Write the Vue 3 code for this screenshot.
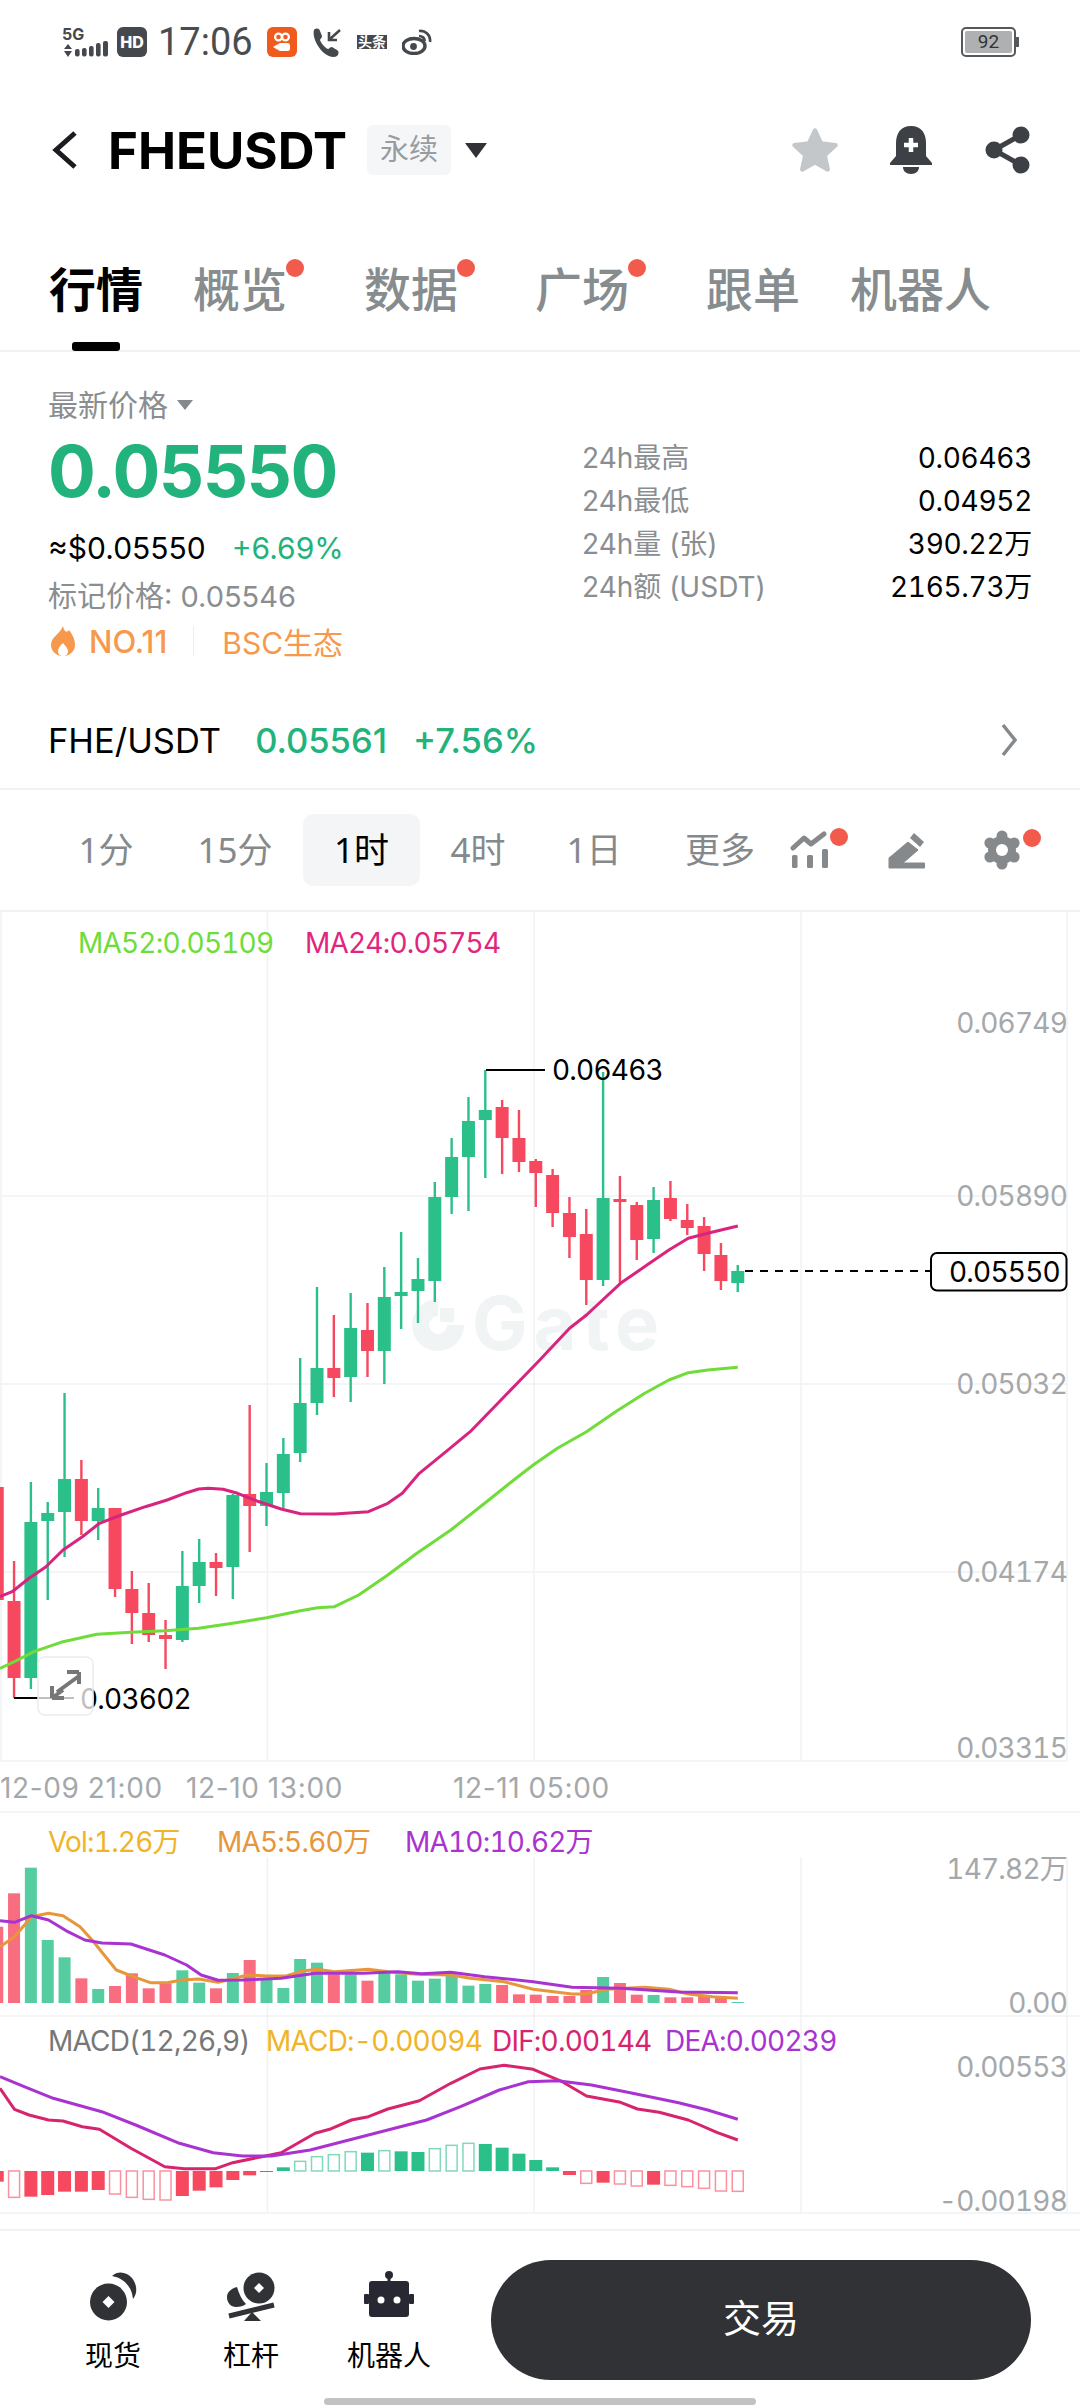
<script setup>
const GREEN = '#2bc08a'
const RED = '#f6485f'

// [tipo, mecha arriba, mecha abajo, cuerpo arriba, cuerpo abajo]
const velas = [
  ['r', 1487, 1600, 1487, 1600], ['r', 1561, 1698, 1601, 1678], ['g', 1482, 1689, 1522, 1678],
  ['g', 1502, 1600, 1513, 1521], ['g', 1393, 1557, 1479, 1512], ['r', 1460, 1535, 1479, 1521],
  ['g', 1488, 1540, 1508, 1521], ['r', 1508, 1597, 1508, 1589], ['r', 1571, 1644, 1589, 1613],
  ['r', 1583, 1642, 1613, 1635], ['r', 1620, 1669, 1635, 1639], ['g', 1551, 1642, 1586, 1640],
  ['g', 1539, 1603, 1562, 1586], ['r', 1553, 1596, 1562, 1568], ['g', 1494, 1599, 1495, 1567],
  ['r', 1405, 1552, 1494, 1506], ['g', 1463, 1526, 1492, 1506], ['g', 1438, 1508, 1454, 1493],
  ['g', 1358, 1462, 1403, 1453], ['g', 1287, 1415, 1368, 1403], ['r', 1315, 1397, 1368, 1378],
  ['g', 1293, 1402, 1328, 1377], ['r', 1303, 1377, 1330, 1351], ['g', 1267, 1384, 1297, 1351],
  ['g', 1232, 1329, 1292, 1296], ['g', 1258, 1323, 1279, 1291], ['g', 1182, 1302, 1197, 1281],
  ['g', 1138, 1214, 1157, 1197], ['g', 1097, 1211, 1121, 1157], ['g', 1070, 1178, 1110, 1120],
  ['r', 1100, 1174, 1107, 1138], ['r', 1110, 1172, 1138, 1162], ['r', 1159, 1207, 1161, 1173],
  ['r', 1169, 1227, 1175, 1213], ['r', 1197, 1258, 1213, 1237], ['r', 1209, 1305, 1234, 1280],
  ['g', 1072, 1286, 1198, 1280], ['r', 1176, 1285, 1199, 1202], ['r', 1202, 1260, 1205, 1240],
  ['g', 1187, 1253, 1200, 1239], ['r', 1181, 1221, 1198, 1219], ['r', 1204, 1235, 1220, 1228],
  ['r', 1217, 1271, 1226, 1254], ['r', 1243, 1290, 1255, 1281], ['g', 1265, 1292, 1271, 1283],
]

const volumen = [
  ['r', 410], ['r', 310], ['g', 233], ['g', 450], ['g', 502], ['r', 565], ['g', 597], ['r', 588], ['r', 550],
  ['r', 595], ['r', 580], ['g', 541], ['g', 578], ['r', 595], ['g', 549], ['r', 510], ['g', 565], ['g', 594],
  ['g', 507], ['g', 518], ['r', 553], ['g', 553], ['r', 572], ['g', 548], ['g', 553], ['g', 572], ['g', 566],
  ['g', 553], ['g', 587], ['g', 582], ['r', 585], ['r', 613], ['r', 614], ['r', 618], ['r', 618], ['r', 600],
  ['g', 561], ['r', 579], ['r', 614], ['g', 615], ['r', 622], ['r', 622], ['r', 618], ['r', 620], ['g', 636],
]

// [tipo, extremo, hueco]
const histograma = [
  ['r', 1175, 0], ['r', 1222, 1], ['r', 1220, 0], ['r', 1215, 0], ['r', 1205, 0], ['r', 1205, 0], ['r', 1200, 0],
  ['r', 1212, 1], ['r', 1222, 1], ['r', 1228, 1], ['r', 1230, 1], ['r', 1218, 0], ['r', 1202, 0], ['r', 1192, 0],
  ['r', 1170, 0], ['r', 1156, 0], ['r', 1146, 0], ['g', 1132, 0], ['g', 1114, 1], ['g', 1100, 1], ['g', 1094, 1],
  ['g', 1085, 1], ['g', 1088, 0], ['g', 1082, 1], ['g', 1084, 0], ['g', 1086, 0], ['g', 1076, 1], ['g', 1066, 1],
  ['g', 1060, 1], ['g', 1062, 0], ['g', 1073, 0], ['g', 1091, 0], ['g', 1110, 0], ['g', 1132, 0], ['r', 1155, 0],
  ['r', 1180, 1], ['r', 1178, 0], ['r', 1182, 1], ['r', 1188, 1], ['r', 1184, 0], ['r', 1186, 1], ['r', 1190, 1],
  ['r', 1195, 1], ['r', 1203, 1], ['r', 1204, 1],
]

const xVela = (i) => 14.06 + (i - 1) * 16.83
const colorDe = (t) => (t === 'g' ? GREEN : RED)
const yInf = (z) => 1790 + z / 3

const linea = (pts, y0) =>
  pts.map(([x, y]) => `${(x / 2.063).toFixed(1)},${(y0 + y / 3).toFixed(1)}`).join(' ')

const ma24 = linea([[0,770],[25,755],[60,715],[95,680],[130,630],[170,590],[205,550],[250,525],[300,500],[345,480],[385,458],[410,447],[430,445],[460,448],[490,460],[530,483],[580,507],[620,521],[690,522],[760,515],[800,490],[830,460],[865,400],[920,335],[970,275],[1030,185],[1070,125],[1110,65],[1175,-35],[1210,-75],[1280,-170],[1340,-230],[1380,-270],[1420,-305],[1460,-320],[1522,-342]], 1340)
const ma52 = linea([[0,985],[30,965],[70,935],[130,905],[200,883],[270,877],[340,872],[410,865],[480,850],[550,833],[620,812],[655,803],[690,800],[740,765],[800,705],[860,640],[930,570],[1000,490],[1060,420],[1100,375],[1150,325],[1210,275],[1270,215],[1330,160],[1380,120],[1420,98],[1460,90],[1522,82]], 1340)
const ma5 = linea([[0,470],[30,440],[65,380],[100,370],[130,377],[165,410],[190,450],[240,540],[275,560],[310,578],[345,578],[375,570],[410,567],[450,577],[480,567],[510,555],[550,558],[590,558],[625,543],[655,538],[690,545],[760,538],[800,545],[860,553],[930,555],[970,565],[1040,575],[1100,598],[1180,612],[1210,612],[1250,598],[1330,592],[1380,598],[1420,612],[1470,620],[1522,625]], 1790)
const ma10 = linea([[0,392],[30,397],[65,377],[100,390],[140,425],[175,450],[210,459],[270,462],[340,495],[385,525],[415,555],[450,571],[500,570],[580,565],[650,550],[750,550],[820,545],[870,551],[930,547],[1000,560],[1100,575],[1180,592],[1280,595],[1400,606],[1522,608]], 1790)
const dif = linea([[0,895],[30,958],[60,975],[100,990],[130,993],[170,1010],[205,1018],[270,1075],[340,1130],[380,1136],[445,1136],[480,1118],[540,1100],[580,1088],[650,1030],[680,1018],[725,990],[760,980],[800,957],[865,932],[930,880],[990,837],[1040,826],[1100,838],[1160,875],[1210,918],[1280,937],[1315,957],[1360,967],[1420,990],[1480,1028],[1522,1050]], 1790)
const dea = linea([[0,860],[50,890],[110,925],[210,965],[280,1005],[370,1060],[440,1088],[500,1098],[560,1098],[640,1080],[720,1050],[800,1020],[880,990],[950,950],[1030,900],[1090,875],[1150,872],[1220,885],[1300,908],[1400,938],[1460,960],[1522,988]], 1790)

const tabs = [
  { t: '行情', on: true },
  { t: '概览', dot: true },
  { t: '数据', dot: true },
  { t: '广场', dot: true },
  { t: '跟单' },
  { t: '机器人' },
]
const stats = [
  ['24h最高', '0.06463'],
  ['24h最低', '0.04952'],
  ['24h量 (张)', '390.22万'],
  ['24h额 (USDT)', '2165.73万'],
]
const intervalos = [
  { t: '1分', c: 'i1' },
  { t: '15分', c: 'i2' },
  { t: '1时', c: 'i3 on' },
  { t: '4时', c: 'i4' },
  { t: '1日', c: 'i5' },
  { t: '更多', c: 'i6' },
]
const ejeY = [['0.06749', 1023], ['0.05890', 1196], ['0.05032', 1384], ['0.04174', 1572], ['0.03315', 1748]]
// lobulos del engranaje
const dientes = [0, 60, 120, 180, 240, 300].map((a) => ({
  x: 1002 + 14 * Math.sin((a * Math.PI) / 180),
  y: 850 - 14 * Math.cos((a * Math.PI) / 180),
}))
</script>

<template>
  <div class="page">
    <div class="status">
      <div class="signal">
        <span class="five">5G</span>
        <svg width="48" height="18" viewBox="62 39 48 18">
          <path d="M64 48l4-5 4 5zM64 50l4 6 4-6z" fill="#45484c" />
          <rect x="75" y="48" width="4.6" height="7.5" rx="2" fill="#45484c" />
          <rect x="82" y="47" width="4.6" height="8.5" rx="2" fill="#45484c" />
          <rect x="89" y="45" width="4.6" height="10.5" rx="2" fill="#45484c" />
          <rect x="96" y="42" width="4.6" height="13.5" rx="2" fill="#45484c" />
          <rect x="103" y="40" width="5" height="15.5" rx="2" fill="#45484c" />
        </svg>
      </div>
      <span class="hd">HD</span>
      <span class="time">17:06</span>
      <svg class="ic-kw" width="30" height="30" viewBox="0 0 30 30">
        <rect width="30" height="30" rx="6" fill="#f15a1d" />
        <circle cx="11.5" cy="10" r="3.4" fill="none" stroke="#fff" stroke-width="2.2" />
        <circle cx="18.5" cy="10" r="3.4" fill="none" stroke="#fff" stroke-width="2.2" />
        <rect x="11" y="16" width="12" height="8" rx="2.5" fill="#fff" />
        <path d="M6 20l5-3v6z" fill="#fff" />
      </svg>
      <svg class="ic-ph" width="30" height="30" viewBox="0 0 30 30">
        <path d="M2 3c2-2 5-2 6 1l2 5c0 2-2 3-2 4 1 3 5 8 8 9 1 0 2-2 4-2l5 3c2 1 2 4 0 6-3 2-8 1-13-3C6 21 0 10 2 3z" fill="#45484c" />
        <path d="M28 3L18 12M17 5v8h8" fill="none" stroke="#45484c" stroke-width="2.6" />
      </svg>
      <span class="toutiao">头条</span>
      <svg class="ic-wb" width="30" height="26" viewBox="0 0 30 26">
        <ellipse cx="12" cy="17" rx="11" ry="7.5" fill="none" stroke="#45484c" stroke-width="3.4" />
        <circle cx="11.5" cy="17.5" r="3.4" fill="#45484c" />
        <path d="M17 2c6-1 12 4 11 11M17 7c3 0 6 2 5.5 5" fill="none" stroke="#45484c" stroke-width="2.6" />
      </svg>
      <div class="battery"><span>92</span></div>
    </div>

    <div class="header">
      <svg class="back" width="26" height="38" viewBox="0 0 26 38">
        <path d="M23 2L4 19l19 17" fill="none" stroke="#1a1c1f" stroke-width="5" />
      </svg>
      <span class="symbol">FHEUSDT</span>
      <span class="tag">永续</span>
      <i class="tri"></i>
      <svg class="star" width="52" height="48" viewBox="0 0 24 22">
        <path d="M12 2l2.8 6 6.7.8-5 4.6 1.4 6.6-5.9-3.3L6.100 20l1.4-6.6-5-4.6 6.7-.8z" fill="#c4c7ca" stroke="#c4c7ca" stroke-width="2" stroke-linejoin="round" />
      </svg>
      <svg class="bell" width="44" height="48" viewBox="0 0 44 48">
        <path d="M22 0c10 0 15 7 15 17v13l6 7v2H1v-2l6-7V17C7 7 12 0 22 0z" fill="#3d4045" />
        <path d="M14 41h16c0 4-3 7-8 7s-8-3-8-7z" fill="#3d4045" />
        <path d="M22 12v14M15 19h14" stroke="#fff" stroke-width="4.5" />
      </svg>
      <svg class="share" width="46" height="48" viewBox="0 0 46 48">
        <path d="M36 9L9 24l27 15" fill="none" stroke="#3d4045" stroke-width="5" />
        <circle cx="36" cy="9" r="8.5" fill="#3d4045" />
        <circle cx="9" cy="24" r="8.5" fill="#3d4045" />
        <circle cx="36" cy="39" r="8.5" fill="#3d4045" />
      </svg>
    </div>

    <div class="tabs">
      <div v-for="tab in tabs" :key="tab.t" class="tab" :class="{ on: tab.on, dotted: tab.dot }">
        {{ tab.t }}
        <i v-if="tab.dot" class="dot"></i>
        <i v-if="tab.on" class="under"></i>
      </div>
    </div>

    <div class="resumen">
      <div class="left">
        <div class="latest">最新价格<i class="mini-tri"></i></div>
        <div class="last">0.05550</div>
        <div class="fiat">≈$0.05550<span class="pct">+6.69%</span></div>
        <div class="mark">标记价格: 0.05546</div>
        <div class="tags">
          <svg width="26" height="30" viewBox="0 0 26 30">
            <path d="M13 0c1 6 4 7 6 4 4 5 6 10 6 15 0 6-5 11-12 11S1 25 1 19C1 11 10 8 13 0z" fill="#f7994c" />
            <path d="M13 17c-3 3-5 5-5 8s2 5 5 5 5-2 5-5-3-5-5-8z" fill="#fff" />
          </svg>
          <span class="no">NO.11</span>
          <i class="sep"></i>
          <span class="bsc">BSC生态</span>
        </div>
      </div>
      <div class="right">
        <div v-for="s in stats" :key="s[0]" class="stat">
          <span class="k">{{ s[0] }}</span>
          <span class="v">{{ s[1] }}</span>
        </div>
      </div>
    </div>

    <div class="pair">
      <span class="name">FHE/USDT</span>
      <span class="up p1">0.05561</span>
      <span class="up">+7.56%</span>
      <svg class="chev" width="18" height="36" viewBox="0 0 18 36">
        <path d="M3 3l12 15L3 33" fill="none" stroke="#85898c" stroke-width="3.5" />
      </svg>
    </div>

    <div class="intervals">
      <div v-for="it in intervalos" :key="it.t" class="iv" :class="it.c">{{ it.t }}</div>
      <div class="tool t1">
        <svg width="42" height="42" viewBox="791 829 42 42">
          <path d="M794 848l11-10 7 6 13-10" fill="none" stroke="#86898c" stroke-width="5" stroke-linecap="round" stroke-linejoin="round" />
          <rect x="793" y="855" width="5.5" height="13" rx="1.5" fill="#86898c" />
          <rect x="808" y="855" width="6" height="13" rx="1.5" fill="#86898c" />
          <rect x="823" y="849" width="6" height="19" rx="1.5" fill="#86898c" />
        </svg>
        <i class="dot"></i>
      </div>
      <div class="tool t2">
        <svg width="40" height="40" viewBox="886 830 40 40">
          <path d="M913 833l10 9-4 5-10-9z" fill="#86898c" />
          <path d="M907 842l10 8-15 13h21.5v5H888v-10z" fill="#86898c" stroke="#86898c" stroke-width="1" stroke-linejoin="round" />
        </svg>
      </div>
      <div class="tool t3">
        <svg width="40" height="40" viewBox="982 830 40 40">
          <circle cx="1002" cy="850" r="14" fill="#86898c" />
          <circle v-for="(d, i) in dientes" :key="i" :cx="d.x" :cy="d.y" r="5.5" fill="#86898c" />
          <circle cx="1002" cy="850" r="6" fill="#fff" />
        </svg>
        <i class="dot"></i>
      </div>
    </div>

    <svg class="chart" width="1080" height="1317" viewBox="0 912 1080 1317">
      <!-- rejilla -->
      <g stroke="#f1f2f3" stroke-width="1.5">
        <path d="M1 912V1761M267.5 912V1761M534 912V1761M801 912V1761M1067 912V1761" />
        <path d="M0 1196H1067M0 1384H1067M0 1572H1067M0 1761H1067M0 1812H1080M0 2016H1080M0 2213H1080" />
        <path d="M267.5 1857V2213M534 1857V2213M801 1857V2213M1067 1857V2213" />
      </g>

      <!-- marca de agua -->
      <g fill="#f1f4f4">
        <path d="M438 1299a26 26 0 1 0 26 26h-17a9 9 0 1 1-9-9z" />
        <rect x="440" y="1308" width="14" height="14" />
      </g>
      <text class="wm" x="472" y="1350">Gate</text>

      <text class="tx c-ma52" x="78" y="943">MA52:0.05109</text>
      <text class="tx c-ma24" x="305" y="943">MA24:0.05754</text>

      <!-- velas -->
      <g v-for="(v, i) in velas" :key="'v' + i">
        <rect :x="xVela(i) - 1.2" :y="v[1]" width="2.4" :height="v[2] - v[1]" :fill="colorDe(v[0])" />
        <rect :x="xVela(i) - 6.5" :y="v[3]" width="13" :height="v[4] - v[3]" :fill="colorDe(v[0])" />
      </g>
      <polyline :points="ma24" class="ln" stroke="#d8237f" stroke-width="3" />
      <polyline :points="ma52" class="ln" stroke="#6fdc3a" stroke-width="3" />

      <text v-for="e in ejeY" :key="e[0]" class="tx gris end" x="1067" :y="e[1]">{{ e[0] }}</text>

      <path d="M486 1070H545" stroke="#000" stroke-width="2" fill="none" />
      <text class="tx neg" x="552" y="1070">0.06463</text>
      <path d="M14 1698H74" stroke="#000" stroke-width="2" fill="none" />
      <text class="tx neg" x="80" y="1699">0.03602</text>

      <rect x="38" y="1657" width="55" height="58" rx="7" fill="#fff" fill-opacity=".75" stroke="#ececec" stroke-width="1.5" />
      <path d="M57 1692l22-16M79 1672v12M79 1672h-12M52 1698l11-8M52 1698v-12M52 1698h12" stroke="#777" stroke-width="4" fill="none" />

      <path d="M745 1271H931" stroke="#000" stroke-width="2" stroke-dasharray="8 7" fill="none" />
      <rect x="931" y="1253" width="135.5" height="37.5" rx="6" fill="#fff" stroke="#000" stroke-width="2" />
      <text class="tx neg" x="949" y="1272">0.05550</text>

      <text class="tx gris fecha" x="0" y="1788">12-09 21:00</text>
      <text class="tx gris fecha" x="186" y="1788">12-10 13:00</text>
      <text class="tx gris fecha" x="453" y="1788">12-11 05:00</text>

      <!-- volumen -->
      <text class="tx c-vol" x="48" y="1842">Vol:1.26万</text>
      <text class="tx c-ma5" x="217" y="1842">MA5:5.60万</text>
      <text class="tx c-ma10" x="405" y="1842">MA10:10.62万</text>
      <text class="tx gris end" x="1067" y="1869">147.82万</text>
      <text class="tx gris end" x="1067" y="2003">0.00</text>
      <rect
        v-for="(b, i) in volumen"
        :key="'b' + i"
        :x="xVela(i) - 6"
        :y="yInf(b[1])"
        width="12"
        :height="2003 - yInf(b[1])"
        :fill="colorDe(b[0])"
        fill-opacity=".8"
      />
      <polyline :points="ma5" class="ln" stroke="#e8963a" stroke-width="3" />
      <polyline :points="ma10" class="ln" stroke="#a933d0" stroke-width="3" />

      <!-- macd -->
      <text class="tx c-gr" x="48" y="2041">MACD(12,26,9)</text>
      <text class="tx c-vol" x="266" y="2041">MACD:-0.00094</text>
      <text class="tx c-dif" x="492" y="2041">DIF:0.00144</text>
      <text class="tx c-ma10" x="665" y="2041">DEA:0.00239</text>
      <text class="tx gris end" x="1067" y="2067">0.00553</text>
      <text class="tx gris end" x="1067" y="2201">-0.00198</text>
      <g v-for="(h, i) in histograma" :key="'h' + i">
        <rect
          v-if="h[2]"
          :x="xVela(i) - 5.5"
          :y="Math.min(yInf(h[1]), 2171)"
          width="11"
          :height="Math.abs(yInf(h[1]) - 2171)"
          fill="#fff"
          :stroke="colorDe(h[0])"
          stroke-opacity=".6"
          stroke-width="1.5"
        />
        <rect
          v-else
          :x="xVela(i) - 6.5"
          :y="Math.min(yInf(h[1]), 2171)"
          width="13"
          :height="Math.abs(yInf(h[1]) - 2171)"
          :fill="colorDe(h[0])"
        />
      </g>
      <polyline :points="dif" class="ln" stroke="#d6246e" stroke-width="3" />
      <polyline :points="dea" class="ln" stroke="#a933d0" stroke-width="3" />
    </svg>

    <div class="bottom">
      <div class="nav">
        <svg width="50" height="52" viewBox="88 2268 50 52">
          <circle cx="108.5" cy="2300" r="18.5" fill="#303236" />
          <path d="M108.5 2294l6 6-6 6-6-6z" fill="#fff" />
          <path d="M112 2274C118 2268 127 2270 132 2276C138 2284 137 2292 133 2297C132 2285 124 2276 112 2274z" fill="#303236" />
        </svg>
        <span>现货</span>
      </div>
      <div class="nav">
        <svg width="50" height="52" viewBox="227 2268 50 52">
          <circle cx="260" cy="2286" r="15.5" fill="#303236" />
          <path d="M260 2281l5 5-5 5-5-5z" fill="#fff" />
          <path d="M238 2285C231 2287 228 2291 228 2295C228 2301 232 2305 237 2305C241 2305 245 2304 247 2302C243 2298 240 2292 238 2285z" fill="#303236" />
          <path d="M230 2314L275 2303" stroke="#303236" stroke-width="5" />
          <path d="M253 2310l9 9h-17z" fill="#303236" />
        </svg>
        <span>杠杆</span>
      </div>
      <div class="nav">
        <svg width="50" height="52" viewBox="365 2268 50 52">
          <circle cx="390" cy="2273" r="4" fill="#272832" />
          <rect x="388.5" y="2275" width="3" height="5" fill="#272832" />
          <rect x="370" y="2279" width="40" height="36" rx="3" fill="#272832" />
          <rect x="365" y="2292" width="5" height="10" rx="1" fill="#272832" />
          <rect x="410" y="2292" width="5" height="10" rx="1" fill="#272832" />
          <circle cx="382" cy="2298" r="3.5" fill="#fff" />
          <circle cx="398" cy="2298" r="3.5" fill="#fff" />
        </svg>
        <span>机器人</span>
      </div>
      <div class="trade">交易</div>
    </div>
    <div class="home"><i></i></div>
  </div>
</template>

<style scoped>
.page {
  width: 1080px;
  height: 2408px;
  overflow: hidden;
  background: #fff;
  color: #000;
  font-family: Inter, "Noto Sans CJK SC", sans-serif;
}

.status {
  height: 87px;
  box-sizing: border-box;
  padding: 0 0 3px 62px;
  display: flex;
  align-items: center;
  position: relative;
  color: #4a4d50;
}
.signal {
  width: 48px;
  height: 31px;
  position: relative;
}
.signal svg {
  position: absolute;
  left: 0;
  top: 13px;
}
.five {
  position: absolute;
  left: 0;
  top: -3px;
  font-size: 16px;
  font-weight: 700;
  line-height: 20px;
  color: #45484c;
}
.hd {
  margin-left: 7px;
  width: 30px;
  height: 30px;
  border-radius: 6px;
  background: #45484c;
  color: #fff;
  font-size: 16px;
  font-weight: 800;
  text-align: center;
  line-height: 30px;
}
.time {
  margin-left: 11px;
  font-family: Roboto, sans-serif;
  font-size: 38px;
  width: 96px;
}
.ic-kw {
  margin-left: 13px;
}
.ic-ph {
  margin-left: 15px;
}
.toutiao {
  margin-left: 15px;
  width: 30px;
  height: 14px;
  background: #45484c;
  color: #fff;
  font-size: 14px;
  line-height: 14px;
  font-weight: 700;
  text-align: center;
  white-space: nowrap;
}
.ic-wb {
  margin-left: 15px;
}
.battery {
  position: absolute;
  left: 961px;
  top: 27px;
  width: 55px;
  height: 30px;
  box-sizing: border-box;
  border: 2px solid #55585c;
  border-radius: 5px;
  padding: 2px;
}
.battery::after {
  content: "";
  position: absolute;
  right: -5px;
  top: 8px;
  width: 3px;
  height: 10px;
  background: #55585c;
}
.battery span {
  display: block;
  height: 100%;
  background: #aeb0b2;
  border-radius: 2px;
  font-family: Roboto, sans-serif;
  font-size: 19px;
  line-height: 22px;
  text-align: center;
  color: #333;
}

.header {
  height: 126px;
  display: flex;
  align-items: center;
  padding-left: 52px;
  position: relative;
}
.back {
  margin-right: 30px;
}
.symbol {
  font-size: 51px;
  font-weight: 700;
  width: 259px;
  white-space: nowrap;
}
.tag {
  width: 84px;
  height: 50px;
  line-height: 50px;
  text-align: center;
  background: #f5f6f7;
  border-radius: 6px;
  color: #989c9f;
  font-size: 29px;
}
.tri {
  margin-left: 14px;
  border-left: 11px solid transparent;
  border-right: 11px solid transparent;
  border-top: 15px solid #303236;
}
.star {
  margin-left: auto;
  margin-right: 48px;
}
.bell {
  margin-right: 52px;
}
.share {
  margin-right: 49px;
}

.tabs {
  height: 139px;
  box-sizing: border-box;
  display: flex;
  gap: 50px;
  padding: 50px 0 0 49px;
  border-bottom: 2px solid #f1f2f3;
}
.tab {
  position: relative;
  height: 70px;
  line-height: 54px;
  font-size: 47px;
  font-weight: 500;
  color: #878c8f;
  white-space: nowrap;
}
.tab.on {
  color: #000;
  font-weight: 700;
}
.tab.dotted {
  margin-right: 27px;
}
.tab .dot {
  position: absolute;
  right: -17px;
  top: -4px;
}
.dot {
  width: 18px;
  height: 18px;
  border-radius: 50%;
  background: #f25a4c;
  display: block;
}
.under {
  position: absolute;
  left: 23px;
  bottom: -18px;
  width: 48px;
  height: 9px;
  border-radius: 3px;
  background: #000;
}

.resumen {
  height: 360px;
  box-sizing: border-box;
  padding: 0 48px;
  display: flex;
}
.left {
  width: 534px;
}
.latest {
  margin-top: 32px;
  font-size: 30px;
  line-height: 42px;
  color: #8a8e91;
  display: flex;
  align-items: center;
}
.mini-tri {
  margin-left: 9px;
  border-left: 8px solid transparent;
  border-right: 8px solid transparent;
  border-top: 10px solid #85898c;
}
.last {
  margin-top: 2px;
  font-size: 71px;
  line-height: 86px;
  font-weight: 700;
  letter-spacing: -1.5px;
  color: #22b27c;
}
.fiat {
  margin-top: 13px;
  font-size: 30px;
  line-height: 42px;
}
.pct {
  margin-left: 26px;
  color: #22b27c;
}
.mark {
  margin-top: 7px;
  font-size: 29px;
  line-height: 42px;
  color: #8a8e91;
}
.tags {
  margin-top: 1px;
  display: flex;
  align-items: center;
  height: 44px;
  font-size: 29px;
  color: #f7994c;
}
.tags svg {
  margin: 0 3px 0 2px;
}
.no {
  margin-left: 10px;
  font-size: 31px;
  font-weight: 500;
}
.sep {
  width: 1px;
  height: 30px;
  margin: 0 26px;
  background: #eceded;
}
.bsc {
  font-size: 30px;
  margin-left: 2px;
}
.right {
  flex: 1;
  padding-top: 85px;
}
.stat {
  height: 43px;
  line-height: 43px;
  display: flex;
  justify-content: space-between;
  font-size: 28px;
}
.k {
  color: #8a8e91;
}
.v {
  font-variant-numeric: tabular-nums;
  letter-spacing: -0.3px;
}

.pair {
  height: 56px;
  padding: 0 48px 20px;
  display: flex;
  align-items: center;
  font-size: 34.5px;
  border-bottom: 2px solid #f1f2f3;
}
.name {
  margin-right: 34px;
}
.up {
  color: #22b27c;
  font-weight: 500;
}
.p1 {
  margin-right: 26px;
}
.chev {
  margin-left: auto;
  margin-right: 14px;
}

.intervals {
  height: 120px;
  display: flex;
  align-items: center;
  padding-left: 48px;
  border-bottom: 2px solid #f1f2f3;
}
.iv {
  width: 116px;
  height: 72px;
  line-height: 72px;
  border-radius: 10px;
  text-align: center;
  font-family: "Noto Sans", "Noto Sans CJK SC", sans-serif;
  font-size: 35px;
  color: #85898c;
}
.iv.i2 {
  width: 130px;
  margin-left: 6px;
}
.iv.i3 {
  width: 117px;
  margin-left: 3px;
}
.iv.i6 {
  width: 136px;
}
.iv.on {
  background: #f4f5f6;
  color: #000;
}
.tool {
  position: relative;
  display: flex;
}
.tool .dot {
  position: absolute;
  top: -1px;
}
.t1 {
  margin-left: 2px;
}
.t1 .dot {
  right: -16px;
}
.t2 {
  margin-left: 55px;
}
.t3 {
  margin-left: 55px;
}
.t3 .dot {
  right: -19px;
}

.chart {
  display: block;
}
.tx {
  font-size: 28px;
  font-variant-numeric: tabular-nums;
  letter-spacing: -0.8px;
  dominant-baseline: central;
}
.tx.fecha {
  font-variant-numeric: normal;
  letter-spacing: 0.6px;
}
.end {
  text-anchor: end;
}
.gris {
  fill: #a5a8aa;
}
.neg {
  fill: #000;
}
.c-ma52 {
  fill: #6fdc3a;
}
.c-ma24 {
  fill: #e0267e;
}
.c-vol {
  fill: #f0b429;
}
.c-ma5 {
  fill: #e8963a;
}
.c-ma10 {
  fill: #a933d0;
}
.c-gr {
  fill: #777;
}
.c-dif {
  fill: #d6246e;
}
.ln {
  fill: none;
  stroke-linejoin: round;
}
.wm {
  font-size: 74px;
  font-weight: 700;
  letter-spacing: 6px;
  fill: #f1f4f4;
}

.bottom {
  height: 149px;
  box-sizing: border-box;
  display: flex;
  padding: 29px 0 0 68px;
  border-top: 2px solid #f1f2f3;
}
.nav {
  width: 90px;
  margin-right: 48px;
  display: flex;
  flex-direction: column;
  align-items: center;
  padding-top: 10px;
  font-size: 28px;
  line-height: 40px;
  white-space: nowrap;
}
.nav:nth-child(3) {
  margin-right: 0;
}
.nav svg {
  margin-bottom: 14px;
}
.trade {
  margin-left: 57px;
  width: 540px;
  height: 120px;
  border-radius: 60px;
  background: #303236;
  color: #fff;
  text-align: center;
  line-height: 116px;
  font-size: 38px;
}
.home {
  display: flex;
  justify-content: center;
  padding-top: 20px;
}
.home i {
  width: 432px;
  height: 7px;
  border-radius: 4px;
  background: #c2c2c2;
}
</style>
